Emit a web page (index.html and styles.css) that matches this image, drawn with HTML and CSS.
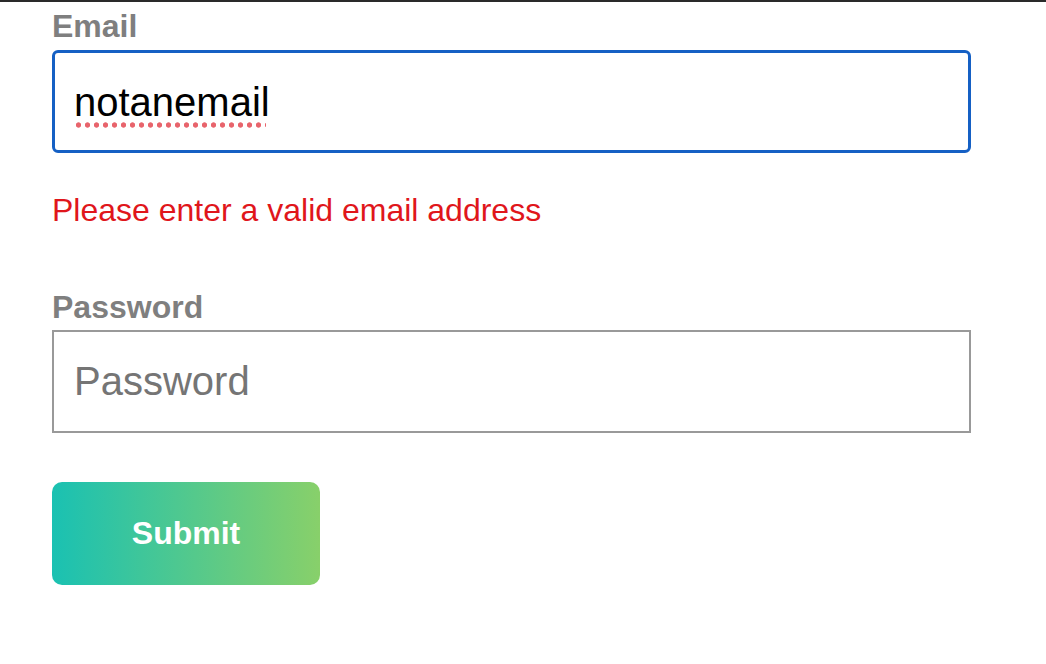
FILE: index.html
```html
<!DOCTYPE html>
<html lang="en">
<head>
    <meta charset="UTF-8">
    <meta name="viewport" content="width=device-width, initial-scale=1.0">
    <title>Sign in</title>
    <link rel="stylesheet" href="styles.css">
</head>
<body>
    <!-- window edge -->
    <div class="top-edge"></div>

    <form class="login-form" onsubmit="return false">
        <div class="field">
            <label class="field-label" for="email">Email</label>
            <div class="field-input is-focused" id="email">
                <span class="misspelled">notanemail</span>
            </div>
            <p class="field-error">Please enter a valid email address</p>
        </div>

        <div class="field">
            <label class="field-label" for="password">Password</label>
            <input class="field-input" id="password" type="password" placeholder="Password">
        </div>

        <button class="submit-btn" type="submit">Submit</button>
    </form>
</body>
</html>
```

FILE: styles.css
```css
* {
    margin: 0;
    padding: 0;
    box-sizing: border-box;
}

body {
    font-family: 'Liberation Sans', Arial, Helvetica, sans-serif;
    background: #fff;
    color: #000;
}

.top-edge {
    height: 2px;
    background: #2a2a2a;
}

/* form */
.login-form {
    display: flex;
    flex-direction: column;
    align-items: flex-start;
    padding: 6px 0 0 52px;
    width: 971px;
}

.field {
    display: flex;
    flex-direction: column;
    width: 100%;
}

.field-label {
    font-size: 32px;
    line-height: 36px;
    font-weight: bold;
    color: #7f7f7f;
    margin-bottom: 6px;
}

.field-input {
    display: flex;
    align-items: center;
    width: 100%;
    height: 103px;
    padding: 0 20px;
    border: 2px solid #999;
    border-radius: 0;
    font-family: inherit;
    font-size: 40px;
    line-height: 44px;
    color: #000;
    background: #fff;
    outline: none;
}

.field-input::placeholder {
    color: #757575;
}

.field-input.is-focused {
    border: 3px solid #1560c4;
    border-radius: 6px;
    padding: 0 19px;
}

/* spellcheck squiggle */
.misspelled {
    position: relative;
}

.misspelled::after {
    content: '';
    position: absolute;
    left: 0;
    right: 4px;
    top: calc(100% - 2px);
    height: 6px;
    background-image: radial-gradient(circle at center, #e8646c 0, #e8646c 2.3px, transparent 3px);
    background-repeat: repeat-x;
    background-size: 9px 6px;
}

.field-error {
    font-size: 32px;
    line-height: 36px;
    color: #e0161b;
    margin: 39px 0 61px;
}

.field + .field .field-label {
    margin-bottom: 5px;
}

/* submit */
.submit-btn {
    margin-top: 49px;
    width: 268px;
    height: 103px;
    border: none;
    border-radius: 10px;
    background: linear-gradient(90deg, #1ac1b2 0%, #88d06a 100%);
    color: #fff;
    font-family: inherit;
    font-size: 32px;
    font-weight: bold;
    cursor: pointer;
}
```
